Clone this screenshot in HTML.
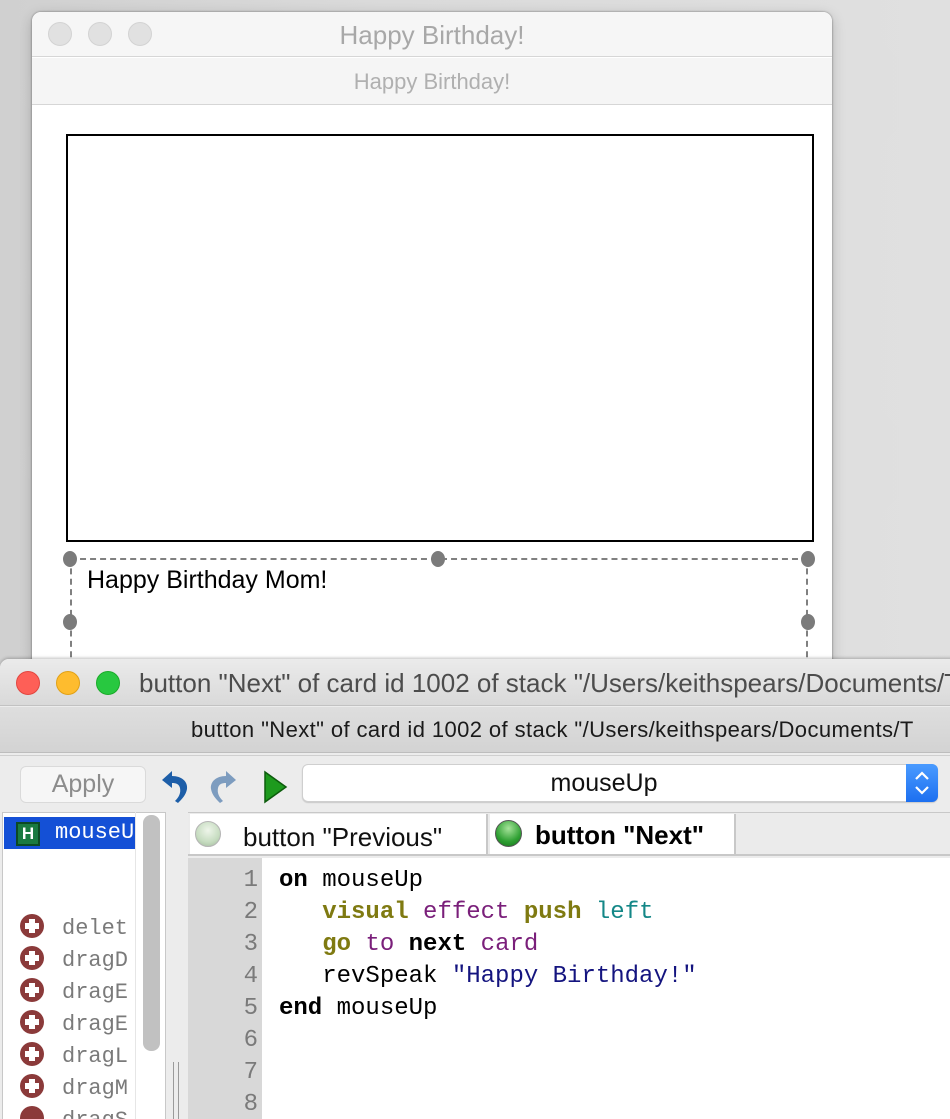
<!DOCTYPE html>
<html><head><meta charset="utf-8"><style>
*{margin:0;padding:0;box-sizing:border-box}
body{width:950px;height:1110px;overflow:hidden;position:relative;background:linear-gradient(90deg,#d0d0d0,#dadada 40%,#e0e0e0);font-family:"Liberation Sans",sans-serif}
.a{position:absolute}
.mono{font-family:"Liberation Mono","DejaVu Sans Mono",monospace}
</style></head><body>
<!-- top window -->
<div class="a" style="left:32px;top:12px;width:800px;height:660px;background:#fff;border-radius:9px 9px 0 0;box-shadow:0 0 2px rgba(0,0,0,.45),0 4px 14px rgba(0,0,0,.2);overflow:hidden">
  <div class="a" style="left:0;top:0;width:800px;height:45px;background:#f6f6f6;border-bottom:1px solid #d6d6d6"></div>
  <div class="a" style="left:16px;top:10px;width:24px;height:24px;border-radius:50%;background:#e1e1e1;border:1px solid #d3d3d3"></div>
  <div class="a" style="left:56px;top:10px;width:24px;height:24px;border-radius:50%;background:#e1e1e1;border:1px solid #d3d3d3"></div>
  <div class="a" style="left:96px;top:10px;width:24px;height:24px;border-radius:50%;background:#e1e1e1;border:1px solid #d3d3d3"></div>
  <div class="a" style="left:0;top:8px;width:800px;text-align:center;font-size:26px;color:#a8a8a8">Happy Birthday!</div>
  <div class="a" style="left:0;top:46px;width:800px;height:47px;background:#f5f5f5;border-bottom:1px solid #d6d6d6"></div>
  <div class="a" style="left:0;top:57px;width:800px;text-align:center;font-size:22px;color:#b0b0b0">Happy Birthday!</div>
  <div class="a" style="left:34px;top:122px;width:748px;height:408px;border:2px solid #000"></div>
  <div class="a" style="left:38px;top:546px;width:738px;height:120px;border-top:2px dashed #808080;border-left:2px dashed #808080;border-right:2px dashed #808080"></div>
  <div class="a" style="left:31px;top:539px;width:14px;height:16px;border-radius:50%;background:#7b7b7b"></div>
  <div class="a" style="left:399px;top:539px;width:14px;height:16px;border-radius:50%;background:#7b7b7b"></div>
  <div class="a" style="left:769px;top:539px;width:14px;height:16px;border-radius:50%;background:#7b7b7b"></div>
  <div class="a" style="left:31px;top:602px;width:14px;height:16px;border-radius:50%;background:#7b7b7b"></div>
  <div class="a" style="left:769px;top:602px;width:14px;height:16px;border-radius:50%;background:#7b7b7b"></div>
  <div class="a" style="left:55px;top:554px;font-size:25px;color:#000">Happy Birthday Mom!</div>
</div>
<!-- lower window -->
<div class="a" style="left:0;top:659px;width:960px;height:460px;background:#ececec;border-radius:9px 0 0 0;box-shadow:0 -1px 3px rgba(0,0,0,.25);overflow:hidden">
  <div class="a" style="left:0;top:0;width:960px;height:47px;background:linear-gradient(#ebebeb,#d9d9d9);border-bottom:1px solid #c2c2c2"></div>
  <div class="a" style="left:16px;top:12px;width:24px;height:24px;border-radius:50%;background:#fe5f57;border:1px solid #e2463f"></div>
  <div class="a" style="left:56px;top:12px;width:24px;height:24px;border-radius:50%;background:#febc2e;border:1px solid #e1a116"></div>
  <div class="a" style="left:96px;top:12px;width:24px;height:24px;border-radius:50%;background:#28c840;border:1px solid #1aab29"></div>
  <div class="a" style="left:139px;top:9px;font-size:26px;color:#4c4c4c;white-space:nowrap">button "Next" of card id 1002 of stack "/Users/keithspears/Documents/T</div>
  <div class="a" style="left:0;top:48px;width:960px;height:46px;background:linear-gradient(#dedede,#d3d3d3);border-bottom:1px solid #bdbdbd"></div>
  <div class="a" style="left:191px;top:58px;font-size:22px;letter-spacing:0.4px;color:#1a1a1a;white-space:nowrap">button "Next" of card id 1002 of stack "/Users/keithspears/Documents/T</div>
  <div class="a" style="left:0;top:96px;width:960px;height:1px;background:#cfcfcf"></div>
  <div class="a" style="left:20px;top:107px;width:126px;height:37px;background:#f6f6f6;border:1px solid #dadada;border-radius:6px;text-align:center;line-height:35px;font-size:25px;color:#8c8c8c">Apply</div>
  <svg class="a" style="left:158px;top:110px" width="34" height="36" viewBox="0 0 34 36"><path d="M4 11 L14 2 L14 7 C24 7 30 13 29 20 C28 26 24 30 20 34 L17 32 C21 28 23 24 22 19 C21 15 18 14 14 14 L14 19 Z" fill="#1d5ea8"/></svg>
  <svg class="a" style="left:206px;top:110px" width="34" height="36" viewBox="0 0 34 36"><path d="M30 11 L20 2 L20 7 C10 7 4 13 5 20 C6 26 10 30 14 34 L17 32 C13 28 11 24 12 19 C13 15 16 14 20 14 L20 19 Z" fill="#7d9cbf"/></svg>
  <svg class="a" style="left:262px;top:111px" width="26" height="34" viewBox="0 0 26 34"><path d="M3 2 L24 17 L3 32 Z" fill="#1d9a1d" stroke="#0c5c0c" stroke-width="1.5"/></svg>
  <div class="a" style="left:302px;top:105px;width:636px;height:38px;background:#fff;border:1px solid #cfcfcf;border-radius:6px;box-shadow:0 1px 1px rgba(0,0,0,.15)"></div>
  <div class="a" style="left:302px;top:110px;width:604px;text-align:center;font-size:25px;color:#111">mouseUp</div>
  <div class="a" style="left:906px;top:105px;width:32px;height:38px;background:linear-gradient(#4a9bff,#1c6ff0);border-radius:0 6px 6px 0"></div>
  <svg class="a" style="left:912px;top:111px" width="20" height="26" viewBox="0 0 20 26"><path d="M4 9 L10 3 L16 9 M4 17 L10 23 L16 17" fill="none" stroke="#fff" stroke-width="2.2"/></svg>
  <!-- left pane -->
  <div class="a" style="left:2px;top:153px;width:164px;height:310px;background:#fff;border:1px solid #c8c8c8"></div>
  <div class="a" style="left:4px;top:158px;width:131px;height:32px;background:#1450d6"></div>
  <div class="a" style="left:16px;top:163px;width:24px;height:24px;background:#1a7a40;border:2px solid #0c4a24;color:#fff;font-weight:bold;font-size:17px;text-align:center;line-height:20px">H</div>
  <div class="a mono" style="left:55px;top:161px;width:80px;overflow:hidden;white-space:nowrap;font-size:22px;color:#fff">mouseUp</div>
  <div class="a" style="left:143px;top:156px;width:17px;height:236px;background:#c1c1c1;border-radius:8px"></div>
  <div class="a" style="left:135px;top:153px;width:1px;height:310px;background:#e6e6e6"></div>
  <div class="a mono" style="left:62px;top:254px;font-size:22px;line-height:32px;color:#7a7a7a;width:73px;overflow:hidden;white-space:nowrap">delet<br>dragD<br>dragE<br>dragE<br>dragL<br>dragM<br>dragS</div>
  <svg class="a" style="left:18px;top:254px" width="30" height="210" viewBox="0 0 30 210">
    <g fill="#8b3a3a"><circle cx="14" cy="13" r="12"/><circle cx="14" cy="45" r="12"/><circle cx="14" cy="77" r="12"/><circle cx="14" cy="109" r="12"/><circle cx="14" cy="141" r="12"/><circle cx="14" cy="173" r="12"/><circle cx="14" cy="205" r="12"/></g>
    <g fill="#fff"><path d="M11 6h6v4h4v6h-4v4h-6v-4h-4v-6h4z"/><path transform="translate(0,32)" d="M11 6h6v4h4v6h-4v4h-6v-4h-4v-6h4z"/><path transform="translate(0,64)" d="M11 6h6v4h4v6h-4v4h-6v-4h-4v-6h4z"/><path transform="translate(0,96)" d="M11 6h6v4h4v6h-4v4h-6v-4h-4v-6h4z"/><path transform="translate(0,128)" d="M11 6h6v4h4v6h-4v4h-6v-4h-4v-6h4z"/><path transform="translate(0,160)" d="M11 6h6v4h4v6h-4v4h-6v-4h-4v-6h4z"/></g>
  </svg>
  <div class="a" style="left:173px;top:403px;width:1px;height:60px;background:#9a9a9a"></div>
  <div class="a" style="left:178px;top:403px;width:1px;height:60px;background:#9a9a9a"></div>
  <!-- tabs -->
  <div class="a" style="left:188px;top:153px;width:772px;height:44px;background:#ebebeb;border-top:1px solid #c8c8c8;border-bottom:2px solid #c8c8c8"></div>
  <div class="a" style="left:190px;top:155px;width:298px;height:40px;background:#fff;border-right:2px solid #c8c8c8"></div>
  <div class="a" style="left:195px;top:162px;width:26px;height:26px;border-radius:50%;background:radial-gradient(circle at 50% 35%,#eef5ea,#c6dcc0 60%,#9fb79a);border:1px solid #b5b5b5"></div>
  <div class="a" style="left:243px;top:163px;font-size:26px;color:#111">button "Previous"</div>
  <div class="a" style="left:490px;top:155px;width:246px;height:40px;background:#fff;border-right:2px solid #c8c8c8"></div>
  <div class="a" style="left:495px;top:161px;width:27px;height:27px;border-radius:50%;background:radial-gradient(circle at 50% 30%,#a6e39a,#2fa033 60%,#137018);border:1px solid #555"></div>
  <div class="a" style="left:535px;top:161px;font-size:26px;font-weight:bold;color:#000">button "Next"</div>
  <!-- code -->
  <div class="a" style="left:188px;top:199px;width:772px;height:270px;background:#fff"></div>
  <div class="a" style="left:188px;top:199px;width:74px;height:270px;background:#d8d8d8"></div>
  <div class="a mono" style="left:190px;top:206px;width:68px;text-align:right;font-size:24px;line-height:32px;color:#7a7a7a">1<br>2<br>3<br>4<br>5<br>6<br>7<br>8</div>
  <div class="a mono" style="left:279px;top:206px;font-size:24px;line-height:32px;color:#000;white-space:pre"><b>on</b> mouseUp
   <b style="color:#7f7a11">visual</b> <span style="color:#7a1f7a">effect</span> <b style="color:#7f7a11">push</b> <span style="color:#148787">left</span>
   <b style="color:#7f7a11">go</b> <span style="color:#7a1f7a">to</span> <b>next</b> <span style="color:#7a1f7a">card</span>
   revSpeak <span style="color:#14147f">"Happy Birthday!"</span>
<b>end</b> mouseUp</div>
</div>
</body></html>
